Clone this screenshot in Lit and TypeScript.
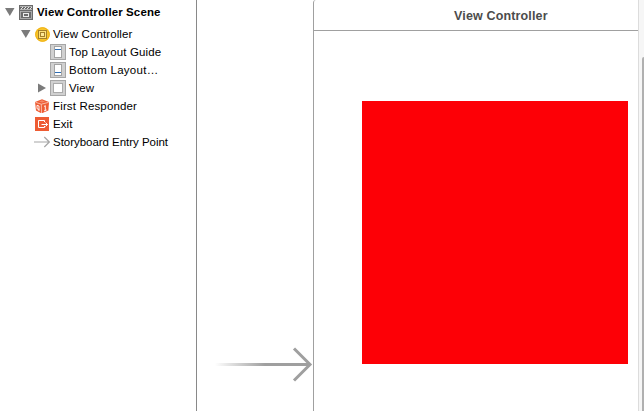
import { LitElement, html, css, svg, nothing } from "lit";
import { customElement } from "lit/decorators.js";
import { styleMap } from "lit/directives/style-map.js";

const icons: Record<string, unknown> = {
  scene: svg`<rect x="0" y="0" width="14" height="15" fill="#6b6b6b"/>
    <path d="M1 1.5h12M1 4.5h12" stroke="#d2d2d2" fill="none" stroke-width=".7"/>
    <path d="M2 4l2-2M5 4l2-2M8 4l2-2M11 4l2-2" stroke="#e4e4e4" stroke-width="1" fill="none"/>
    <rect x="1.5" y="6.5" width="11" height="7" fill="none" stroke="#b8b8b8" stroke-width=".8"/>
    <rect x="4.5" y="8.5" width="5" height="3" fill="none" stroke="#ececec"/>`,
  controller: svg`<circle cx="7.5" cy="7.5" r="7.3" fill="#f9c52b"/>
    <circle cx="7.5" cy="7.5" r="6.8" fill="none" stroke="#eeb014"/>
    <rect x="3.5" y="3.5" width="8" height="8" fill="#ffe27a" stroke="#a5802a"/>
    <rect x="5.5" y="5.5" width="4" height="4" fill="#ffe998" stroke="#a5802a"/>`,
  top: svg`<rect x=".5" y=".5" width="15" height="15" fill="#d0d0d0" stroke="#a6a6a6"/>
    <rect x="4.5" y="2.5" width="7" height="11" fill="#fff" stroke="#a3a3a3"/>
    <path d="M5 5.5h6" stroke="#2e6eb5"/>`,
  bottom: svg`<rect x=".5" y=".5" width="15" height="15" fill="#d0d0d0" stroke="#a6a6a6"/>
    <rect x="4.5" y="2.5" width="7" height="11" fill="#fff" stroke="#a3a3a3"/>
    <path d="M5 10.5h6" stroke="#2e6eb5"/>`,
  view: svg`<rect x=".5" y=".5" width="15" height="15" fill="#d0d0d0" stroke="#a6a6a6"/>
    <rect x="3.5" y="3.5" width="9" height="9" fill="#fff" stroke="#aaa"/>`,
  responder: svg`<path d="M0 3L7 .2 14 3 13.4 11.5 6.5 14.4 1 11.5z" fill="#ee5c33"/>
    <path d="M.5 3.3L6.3 5.2 13.7 3.3M6.3 5.2L6.5 14" stroke="#fbd3c5" fill="none" stroke-width=".8"/>
    <path d="M4 2.5l3-1.2 3 1.2-3 1z" fill="#f58767"/>
    <path d="M2 6.3l2 .7v3.4L2 9.7zM4 10v2M9 7.6l1.3-1v5M9 11.9l2.6-.9" stroke="#fff" fill="none" stroke-width=".9"/>`,
  exit: svg`<rect x="0" y="0" width="14" height="14" fill="#ee5c33"/>
    <path d="M9.5 5V3.5h-6v7h6V9M6.5 7.5h6M10.5 5.5l2 2-2 2" fill="none" stroke="#fff"/>`,
  entry: svg`<path d="M0 8h15M10.3 3l5 5-5 5" fill="none" stroke="#a6a6a6" stroke-width="1.2"/>`,
};

interface Row {
  icon: string;
  size: number;
  label: string;
  indent: number;
  gap: number;
  spacing: number;
  arrow?: "down" | "right";
  scene?: boolean;
}

const rows: Row[] = [
  { icon: "scene", size: 15, label: "View Controller Scene", indent: 5, gap: 3, spacing: 0.11, arrow: "down", scene: true },
  { icon: "controller", size: 15, label: "View Controller", indent: 21, gap: 3, spacing: 0.11, arrow: "down" },
  { icon: "top", size: 16, label: "Top Layout Guide", indent: 36, gap: 3, spacing: 0.13 },
  { icon: "bottom", size: 16, label: "Bottom Layout…", indent: 36, gap: 3, spacing: 0.27 },
  { icon: "view", size: 16, label: "View", indent: 36, gap: 3, spacing: 0.1, arrow: "right" },
  { icon: "responder", size: 14, label: "First Responder", indent: 21, gap: 4, spacing: 0.15 },
  { icon: "exit", size: 14, label: "Exit", indent: 21, gap: 4, spacing: 0.1 },
  { icon: "entry", size: 16, label: "Storyboard Entry Point", indent: 20, gap: 3, spacing: -0.03 },
];

@customElement("app-root")
export class AppRoot extends LitElement {
  static styles = css`
    :host {
      display: flex;
      width: 644px;
      height: 411px;
      overflow: hidden;
      background: #fff;
      font-family: "Liberation Sans", Arial, sans-serif;
    }
    svg { display: block; flex: none; }
    .outline {
      box-sizing: border-box;
      width: 197px;
      padding-top: 3px;
      border-right: 1px solid #898989;
      flex: none;
    }
    .row {
      display: flex;
      align-items: center;
      height: 18px;
      font-size: 11.5px;
      line-height: 18px;
      white-space: nowrap;
      color: #000;
    }
    .scene { font-weight: bold; margin-bottom: 4px; }
    .disclosure { width: 14px; height: 12px; }
    .canvas {
      flex: 1;
      display: flex;
      align-items: flex-start;
    }
    .entry-arrow { margin: 344px 0 0 18px; }
    .frame {
      box-sizing: border-box;
      flex: 1;
      height: 412px;
      border-left: 1px solid #a0a0a0;
      border-top-left-radius: 3px;
    }
    .title {
      box-sizing: border-box;
      height: 31px;
      padding-left: 140px;
      border-bottom: 1px solid #a0a0a0;
      color: #4c4c4c;
      font-size: 12.5px;
      font-weight: bold;
      line-height: 32px;
      letter-spacing: 0.15px;
      white-space: nowrap;
    }
    .red {
      width: 266px;
      height: 263px;
      margin: 70px 0 0 48px;
      background: #fd0006;
    }
    .scroll {
      box-sizing: border-box;
      width: 6px;
      flex: none;
      padding: 57px 0 0 3px;
      border-left: 1px solid #dcdcdc;
      background: #f6f6f6;
    }
    .thumb {
      height: 354px;
      background: #b0b0b0;
      border-top-left-radius: 2px;
    }
  `;

  private renderRow(row: Row) {
    const d = row.arrow === "right" ? "M2 1.5v9l8-4.5z" : "M0 2h9.5l-4.7 8z";
    return html`<div class="row ${row.scene ? "scene" : ""}" style=${styleMap({ paddingLeft: `${row.indent}px` })}>
      <svg class="disclosure" viewBox="0 0 14 12">
        ${row.arrow ? svg`<path d=${d} fill="#7b7b7b"/>` : nothing}
      </svg>
      <svg width=${row.size} height=${row.size} viewBox="0 0 ${row.size} ${row.size}">${icons[row.icon]}</svg>
      <span style=${styleMap({ marginLeft: `${row.gap}px`, letterSpacing: `${row.spacing}px` })}>${row.label}</span>
    </div>`;
  }

  render() {
    return html`
      <div class="outline">${rows.map((r) => this.renderRow(r))}</div>
      <div class="canvas">
        <svg class="entry-arrow" width="98" height="40" viewBox="0 0 98 40">
          <defs>
            <linearGradient id="fade" gradientUnits="userSpaceOnUse" x1="0" y1="0" x2="50" y2="0">
              <stop offset="0" stop-color="#9f9f9f" stop-opacity="0" />
              <stop offset="1" stop-color="#9f9f9f" />
            </linearGradient>
          </defs>
          <rect x="0" y="19" width="94" height="3" fill="url(#fade)" />
          <path d="M79 4.5L95 20.5 79 36.5" fill="none" stroke="#9f9f9f" stroke-width="3" />
        </svg>
        <div class="frame">
          <div class="title">View Controller</div>
          <div class="red"></div>
        </div>
      </div>
      <div class="scroll"><div class="thumb"></div></div>
    `;
  }
}
